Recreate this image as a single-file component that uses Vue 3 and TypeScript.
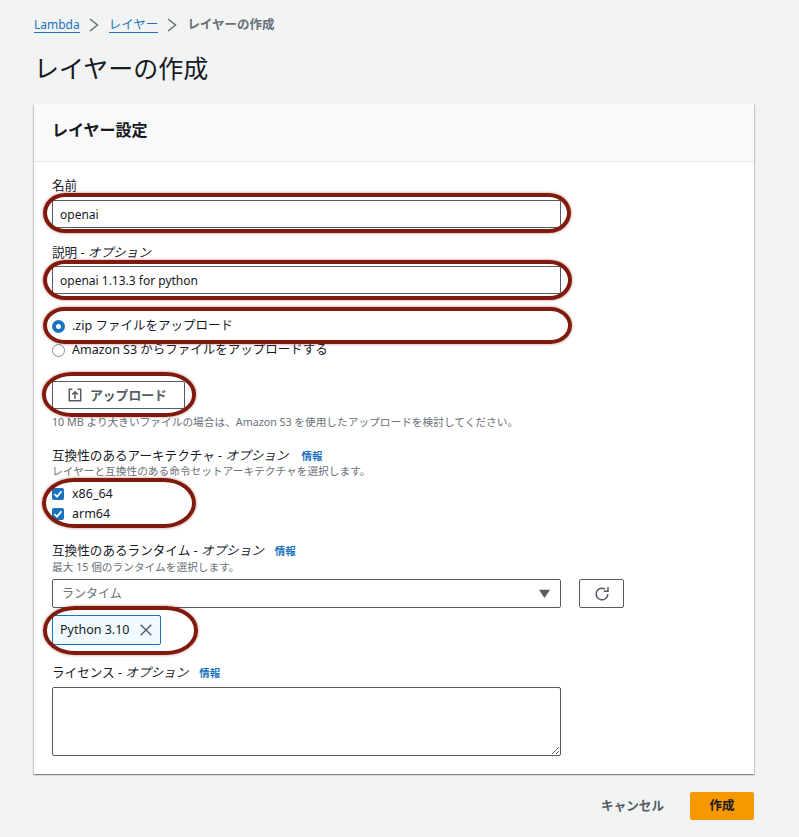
<script setup lang="ts">
const ovals = [
  { cls: 'o1' },
  { cls: 'o2' },
  { cls: 'o3' },
  { cls: 'o4' },
  { cls: 'o5' },
  { cls: 'o6' },
]
</script>

<template>
  <div class="page">
    <nav class="crumbs">
      <a class="link">Lambda</a>
      <svg class="chev" viewBox="0 0 10 14" width="10" height="14"><path d="M1 1l7.500 6L1 13" fill="none" stroke="#687078" stroke-width="1.500" /></svg>
      <a class="link">レイヤー</a>
      <svg class="chev" viewBox="0 0 10 14" width="10" height="14"><path d="M1 1l7.500 6L1 13" fill="none" stroke="#687078" stroke-width="1.500" /></svg>
      <span class="current">レイヤーの作成</span>
    </nav>
    <h1 class="title">レイヤーの作成</h1>

    <section class="card">
      <header class="card-head"><h2>レイヤー設定</h2></header>
      <div class="card-body">
        <label class="label first">名前</label>
        <input class="input" value="openai" readonly />

        <label class="label second">説明 - <i>オプション</i></label>
        <input class="input" value="openai 1.13.3 for python" readonly />

        <div class="radios">
          <div class="radio-row">
            <span class="radio on"></span><span>.zip ファイルをアップロード</span>
          </div>
          <div class="radio-row">
            <span class="radio"></span><span>Amazon S3 からファイルをアップロードする</span>
          </div>
        </div>

        <button class="upload" type="button">
          <svg viewBox="0 0 16 16" width="14" height="14">
            <path d="M5 1.500H1.500v13h13v-13H11M8 12.500V4.500M4.800 7.500 8 4.300l3.200 3.200" fill="none" stroke="#545b64" stroke-width="1.700" />
          </svg>
          <span>アップロード</span>
        </button>
        <p class="hint upload-hint">10 MB より大きいファイルの場合は、Amazon S3 を使用したアップロードを検討してください。</p>

        <div class="label arch">互換性のあるアーキテクチャ - <i>オプション</i><a class="info wide">情報</a></div>
        <p class="hint">レイヤーと互換性のある命令セットアーキテクチャを選択します。</p>
        <div class="checks">
          <div class="check-row"><span class="check"><svg viewBox="0 0 12 12" width="12" height="12"><path d="M2.500 6.200 5 8.700l4.500-5.500" fill="none" stroke="#fff" stroke-width="1.800" /></svg></span>x86_64</div>
          <div class="check-row"><span class="check"><svg viewBox="0 0 12 12" width="12" height="12"><path d="M2.500 6.200 5 8.700l4.500-5.500" fill="none" stroke="#fff" stroke-width="1.800" /></svg></span>arm64</div>
        </div>

        <div class="label runtime">互換性のあるランタイム - <i>オプション</i><a class="info">情報</a></div>
        <p class="hint">最大 15 個のランタイムを選択します。</p>
        <div class="select-row">
          <div class="select">
            <span>ランタイム</span>
            <svg viewBox="0 0 10 8" width="11" height="9"><path d="M0 .5h10L5 8z" fill="#545b64" /></svg>
          </div>
          <button class="refresh" type="button">
            <svg viewBox="0 0 16 16" width="16" height="16">
              <path d="M13.800 8A5.800 5.800 0 1 1 10.900 3" fill="none" stroke="#545b64" stroke-width="1.500" />
              <path d="M14 1v4.200H9.800" fill="none" stroke="#545b64" stroke-width="1.500" />
            </svg>
          </button>
        </div>
        <div class="token">
          <span>Python 3.10</span>
          <svg viewBox="0 0 12 12" width="12" height="12"><path d="M.7.7l10.600 10.600M11.300.7.7 11.300" fill="none" stroke="#545b64" stroke-width="1.400" /></svg>
        </div>

        <div class="label license">ライセンス - <i>オプション</i><a class="info">情報</a></div>
        <textarea class="textarea"></textarea>
      </div>
    </section>

    <footer class="actions">
      <button class="cancel" type="button">キャンセル</button>
      <button class="create" type="button">作成</button>
    </footer>

    <span v-for="o in ovals" :key="o.cls" class="oval" :class="o.cls"></span>
  </div>
</template>

<style>
html, body { margin: 0; background: #f2f3f3; }
</style>

<style scoped>
.page {
  position: relative;
  width: 799px;
  height: 837px;
  box-sizing: border-box;
  padding: 17px 45px 0 34px;
  overflow: hidden;
  background: #f2f3f3;
  color: #16191f;
  font-family: "Noto Sans", "Noto Sans CJK JP", sans-serif;
  font-size: 12.5px;
  line-height: 16px;
}
.crumbs { display: flex; align-items: center; height: 16px; }
.link { color: #1a73c0; border-bottom: 1px solid #1a73c0; line-height: 14px; }
.crumbs .link:first-child { font-size: 12px; }
.chev { margin: 0 10px 0 9px; }
.current { color: #687078; font-weight: 700; }
.title {
  margin: 17px 0 0;
  font-size: 25px;
  line-height: 36px;
  font-weight: 400;
  color: #16191f;
}
.card {
  margin-top: 18px;
  width: 720px;
  height: 670px;
  box-sizing: border-box;
  background: #fff;
  box-shadow: 0 1px 1px 0 rgba(0, 28, 36, 0.3), 1px 1px 1px 0 rgba(0, 28, 36, 0.15), -1px 1px 1px 0 rgba(0, 28, 36, 0.15);
}
.card-head {
  height: 58px;
  box-sizing: border-box;
  background: #fafafa;
  border-bottom: 1px solid #eaeded;
  padding: 0 18px 6px;
  display: flex;
  align-items: center;
}
.card-head h2 { margin: 0; font-size: 16px; font-weight: 700; line-height: 22px; }
.card-body { padding: 15px 18px 0; display: flex; flex-direction: column; align-items: flex-start; }
.label { line-height: 18px; color: #16191f; font-size: 12.6px; }
.label i { font-style: italic; }
.first { height: 23px; }
.second { margin-top: 16px; height: 22px; }
.input {
  width: 509px;
  height: 28px;
  box-sizing: border-box;
  border: 1px solid #545b64;
  border-radius: 2px;
  padding: 0 7px;
  font: inherit;
  font-size: 12px;
  color: #16191f;
  background: #fff;
  outline: none;
}
.radios { margin-top: 24px; display: flex; flex-direction: column; gap: 8px; }
.radio-row { display: flex; align-items: center; gap: 7px; height: 16px; color: #16191f; }
.radio {
  width: 13px;
  height: 13px;
  box-sizing: border-box;
  border: 1px solid #7d8998;
  border-radius: 50%;
  background: #fff;
}
.radio.on { border: 4px solid #1a73c0; }
.upload {
  margin-top: 23px;
  width: 133px;
  height: 28px;
  box-sizing: border-box;
  border: 1px solid #545b64;
  border-radius: 2px;
  background: #fff;
  color: #545b64;
  font: inherit;
  font-size: 12.8px;
  font-weight: 700;
  display: flex;
  align-items: center;
  justify-content: flex-start;
  gap: 8px;
  padding: 0 0 0 15px;
}
.hint { margin: 0; font-size: 10.7px; line-height: 14px; color: #687078; }
.upload-hint { margin-top: 6px; }
.arch { margin-top: 18px; height: 17px; }
.info { margin-left: 11px; color: #1a73c0; font-size: 10.5px; font-weight: 700; }
.info.wide { margin-left: 13px; }
.checks { margin-top: 8px; display: flex; flex-direction: column; gap: 4px; }
.check-row { display: flex; align-items: center; gap: 8px; height: 16px; }
.check {
  width: 12px;
  height: 12px;
  border-radius: 2px;
  background: #1a73c0;
  display: flex;
}
.runtime { margin-top: 20px; }
.select-row { margin-top: 5px; display: flex; gap: 18px; }
.select {
  width: 509px;
  height: 29px;
  box-sizing: border-box;
  border: 1px solid #545b64;
  border-radius: 2px;
  padding: 0 10px 0 9px;
  display: flex;
  align-items: center;
  justify-content: space-between;
  font-size: 12px;
  color: #687078;
  background: #fff;
}
.refresh {
  width: 45px;
  height: 29px;
  box-sizing: border-box;
  border: 1px solid #545b64;
  border-radius: 2px;
  background: #fff;
  padding: 0;
  display: flex;
  align-items: center;
  justify-content: center;
}
.token {
  margin-top: 7px;
  width: 109px;
  height: 30px;
  box-sizing: border-box;
  border: 1px solid #1a73c0;
  border-radius: 2px;
  background: #f1faff;
  padding: 0 8px 0 7px;
  display: flex;
  align-items: center;
  justify-content: space-between;
}
.license { margin-top: 19px; }
.textarea {
  margin-top: 5px;
  display: block;
  width: 509px;
  height: 69px;
  box-sizing: border-box;
  border: 1px solid #545b64;
  border-radius: 2px;
  background: #fff;
  outline: none;
}
.actions {
  margin-top: 18px;
  width: 720px;
  display: flex;
  justify-content: flex-end;
  align-items: center;
  gap: 26px;
}
.cancel {
  border: 0;
  background: none;
  padding: 0;
  font: inherit;
  font-size: 12.6px;
  font-weight: 700;
  color: #545b64;
}
.create {
  width: 64px;
  height: 28px;
  border: 0;
  border-radius: 2px;
  background: #f89800;
  font: inherit;
  font-weight: 700;
  color: #16191f;
  padding: 0;
}
.oval {
  position: absolute;
  box-sizing: border-box;
  border: 4px solid #7f1a0c;
  border-radius: 50%;
  box-shadow: 0 0 3px rgba(127, 26, 12, 0.55);
  pointer-events: none;
}
.o1 { left: 43px; top: 193px; width: 528px; height: 40px; border-radius: 22px / 20px; }
.o2 { left: 43px; top: 260px; width: 529px; height: 40px; border-radius: 22px / 20px; }
.o3 { left: 43px; top: 307px; width: 529px; height: 37px; border-radius: 22px / 19px; }
.o4 { left: 42px; top: 372px; width: 154px; height: 45px; border-radius: 30px / 22px; }
.o5 { left: 42px; top: 478px; width: 154px; height: 50px; border-radius: 32px / 25px; }
.o6 { left: 43px; top: 606px; width: 155px; height: 49px; border-radius: 32px / 24px; }
</style>
